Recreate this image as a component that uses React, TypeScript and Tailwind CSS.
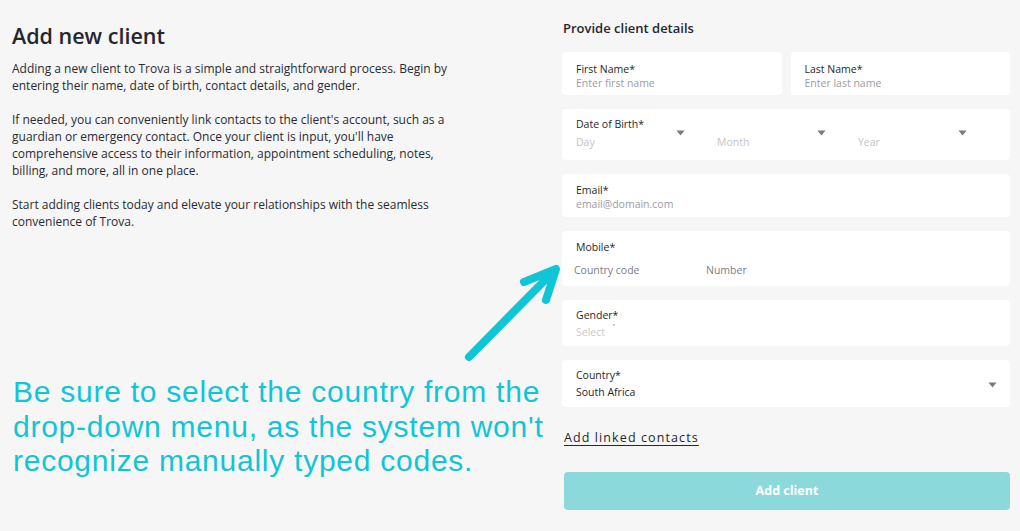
import React from "react";

const font = { fontFamily: '"Open Sans", "Noto Sans", sans-serif' };

function Caret({ className = "" }: { className?: string }) {
  return (
    <svg width="9" height="6" viewBox="0 0 9 6" className={className}>
      <path d="M0.5 0.5 L8.5 0.5 L4.5 5.5 Z" fill="#7a7a7a" />
    </svg>
  );
}

function Label({ children }: { children: React.ReactNode }) {
  return <div className="text-[10.5px] leading-[14px] font-medium text-[#1f1f2b]">{children}</div>;
}

export default function App() {
  return (
    <div className="relative w-[1020px] h-[531px] bg-[#f6f6f6] overflow-hidden" style={font}>
      <div className="flex h-full">
        <div className="w-[470px] pl-[12px] pt-[23px] text-[#2a2a33]">
          <h1 className="text-[21.5px] leading-[26px] font-semibold text-[#26262e]">Add new client</h1>
          <div className="mt-[11px] text-[12px] leading-[17px] flex flex-col gap-[17px] pr-[12px]">
            <p>
              Adding a new client to Trova is a simple and straightforward process. Begin by entering their name, date of birth, contact details, and gender.
            </p>
            <p>
              If needed, you can conveniently link contacts to the client's account, such as a guardian or emergency contact. Once your client is input, you'll have comprehensive access to their information, appointment scheduling, notes, billing, and more, all in one place.
            </p>
            <p>
              Start adding clients today and elevate your relationships with the seamless convenience of Trova.
            </p>
          </div>
        </div>

        <div className="ml-auto mr-[10px] w-[448px] pt-[19px] flex flex-col">
          <h2 className="text-[13px] leading-[18px] font-semibold text-[#26262e] pl-[1px]">Provide client details</h2>
          <div className="mt-[15px] flex flex-col gap-[14px]">
            <div className="flex gap-[9px]">
              <div className="flex-1 h-[43px] bg-white rounded-[4px] px-[14px] pt-[10px]">
                <Label>First Name*</Label>
                <div className="text-[10.5px] leading-[14px] text-[#9b9ba6]">Enter first name</div>
              </div>
              <div className="flex-1 h-[43px] bg-white rounded-[4px] px-[14px] pt-[10px]">
                <Label>Last Name*</Label>
                <div className="text-[10.5px] leading-[14px] text-[#9b9ba6]">Enter last name</div>
              </div>
            </div>

            <div className="h-[51px] bg-white rounded-[4px] px-[14px] pt-[8px]">
              <Label>Date of Birth*</Label>
              <div className="grid grid-cols-3 gap-[27px] pr-[24px]">
                {["Day", "Month", "Year"].map((t) => (
                  <div key={t} className="relative flex h-[22px]">
                    <span className="mt-[4px] text-[10.5px] leading-[14px] text-[#c3c3c9]">{t}</span>
                    <Caret className="absolute right-[5px] top-[-1px]" />
                  </div>
                ))}
              </div>
            </div>

            <div className="h-[43px] bg-white rounded-[4px] px-[14px] pt-[9px]">
              <Label>Email*</Label>
              <div className="text-[10.5px] leading-[14px] text-[#9b9ba6]">email@domain.com</div>
            </div>

            <div className="h-[55px] bg-white rounded-[4px] px-[14px] pt-[9px]">
              <Label>Mobile*</Label>
              <div className="mt-[9px] flex text-[10.5px] leading-[14px] text-[#7d7d88] -ml-[2px]">
                <span className="w-[132px]">Country code</span>
                <span>Number</span>
              </div>
            </div>

            <div className="h-[46px] bg-white rounded-[4px] px-[14px] pt-[8px]">
              <Label>Gender*</Label>
              <div className="mt-[3px] flex items-start text-[10.5px] leading-[14px] text-[#c8c8cc]">
                <span>Select</span>
                <span className="ml-[8px] -mt-[3px] text-[8px] leading-[8px] text-[#555]">'</span>
              </div>
            </div>

            <div className="relative h-[47px] bg-white rounded-[4px] px-[14px] pt-[8px]">
              <Label>Country*</Label>
              <div className="mt-[3px] text-[10.5px] leading-[14px] text-[#26262e]">South Africa</div>
              <Caret className="absolute right-[13px] top-[22px]" />
            </div>
          </div>

          <a className="mt-[23px] ml-[2px] text-[12.5px] leading-[16px] underline underline-offset-[3px] tracking-[1.1px] text-[#26262e] w-fit">
            Add linked contacts
          </a>

          <button className="mt-[26px] ml-[2px] h-[38px] rounded-[4px] bg-[#8bd9db] text-white text-[12.5px] font-bold">
            Add client
          </button>
        </div>
      </div>

      <svg className="absolute left-0 top-0" width="1020" height="531" viewBox="0 0 1020 531">
        <g stroke="#10c5d6" strokeWidth="8" strokeLinecap="round" strokeLinejoin="round" fill="none">
          <path d="M469 357 L553 272" />
          <path d="M524 282 L556 269 L546 300" />
        </g>
      </svg>

      <div
        className="absolute left-[13px] top-[375px] text-[30px] leading-[34.5px] tracking-[0.75px] text-[#10c5d6] whitespace-nowrap"
        style={{ fontFamily: '"Liberation Sans", Arial, sans-serif' }}
      >
        Be sure to select the country from the
        <br />
        drop-down menu, as the system won't
        <br />
        recognize manually typed codes.
      </div>
    </div>
  );
}
